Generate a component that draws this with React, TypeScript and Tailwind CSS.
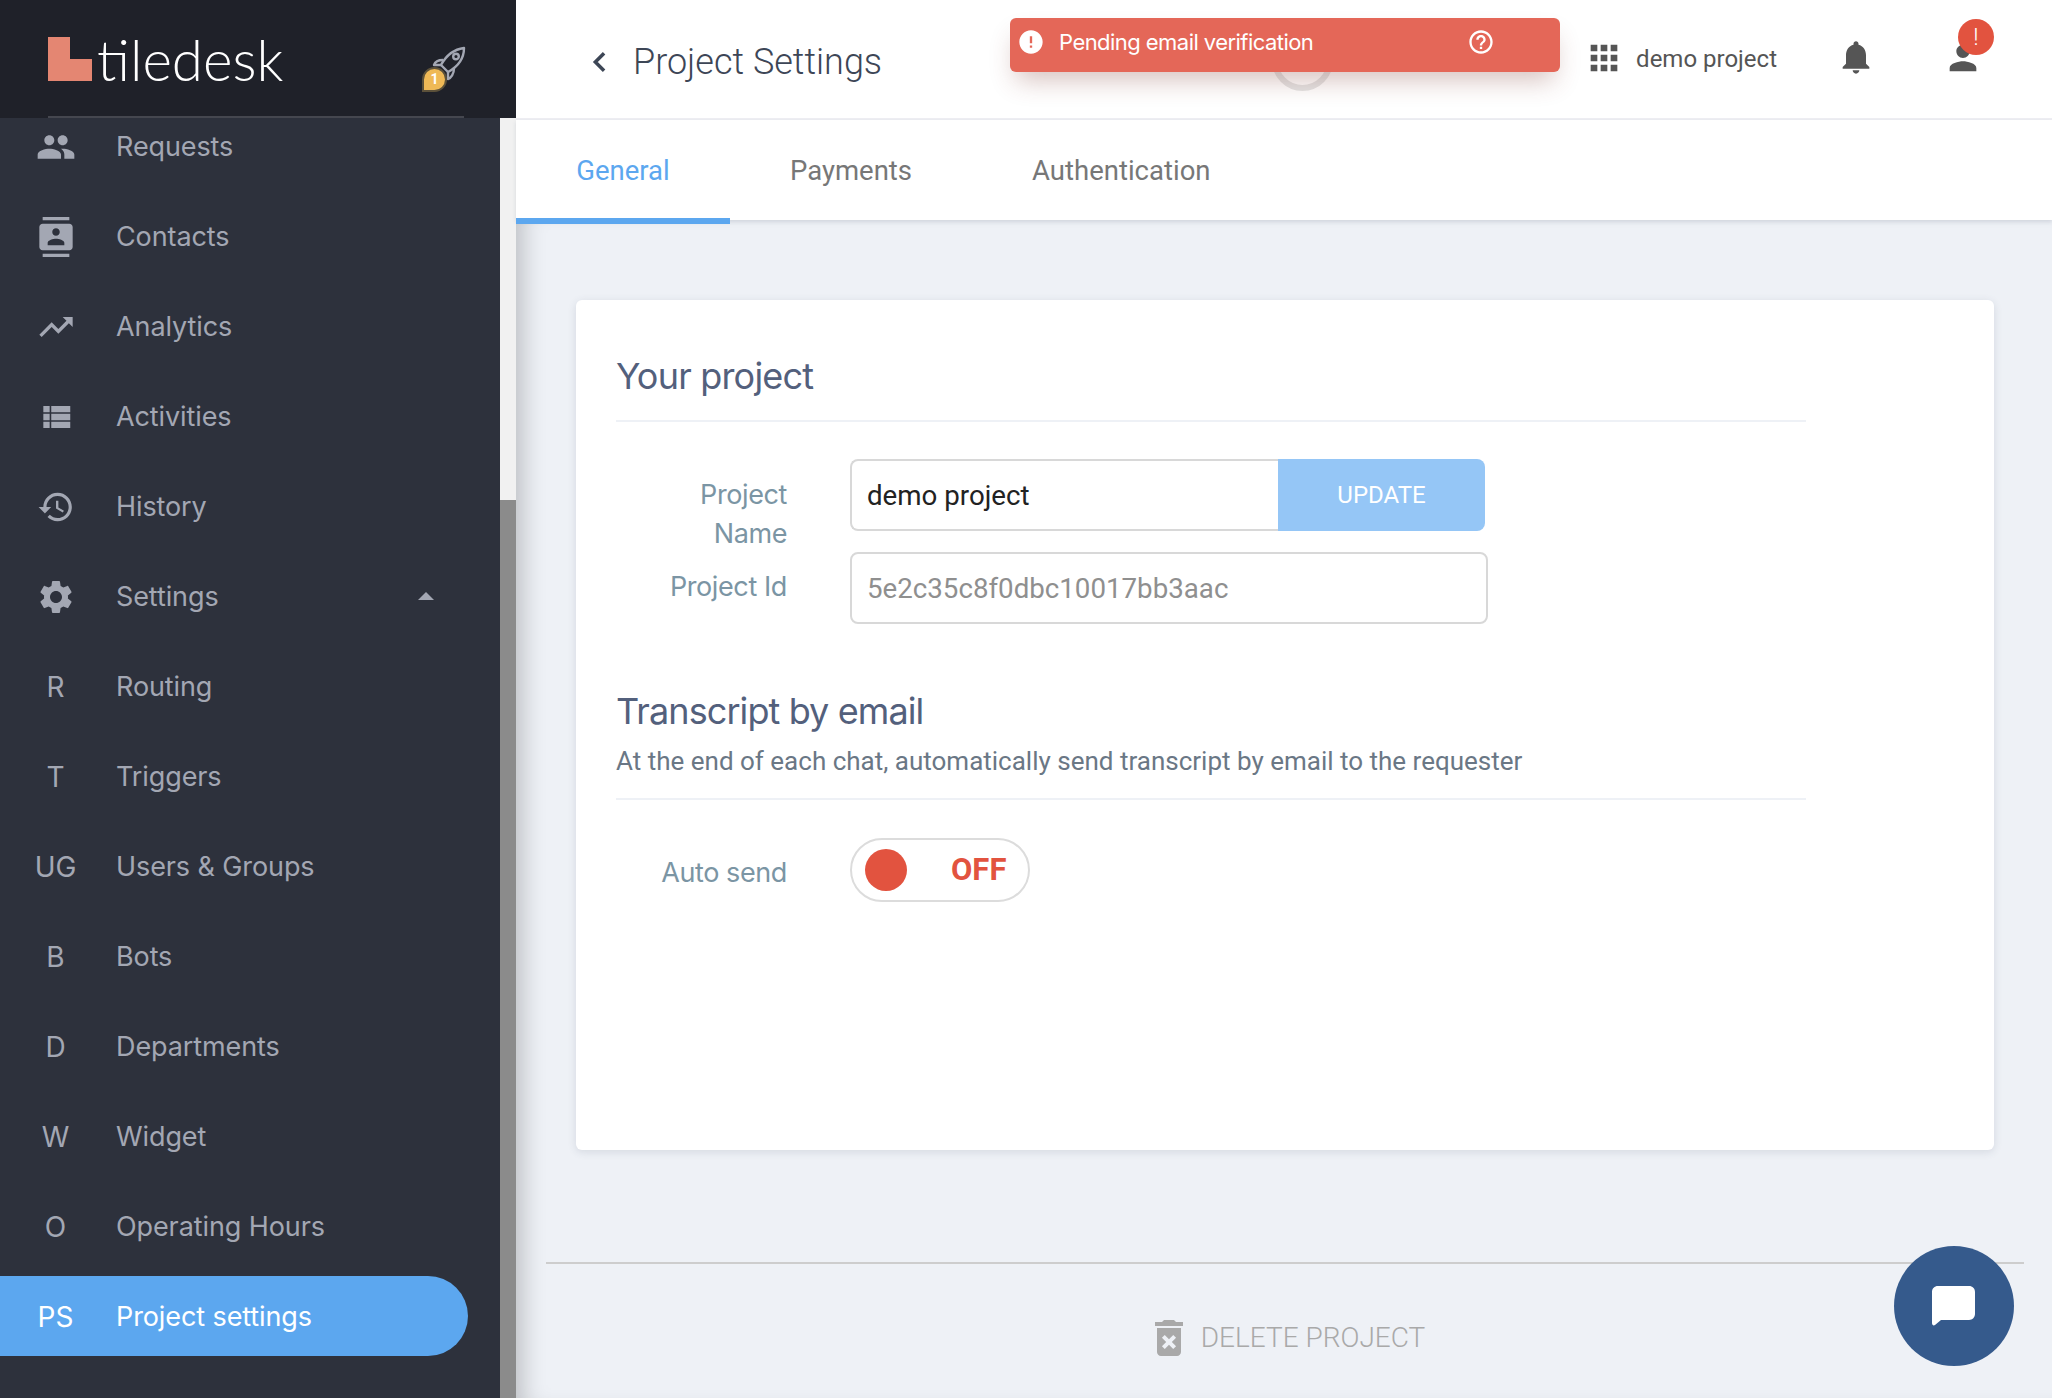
import React from "react";

const P = {
  people: "M16 11c1.66 0 2.99-1.34 2.99-3S17.66 5 16 5c-1.66 0-3 1.34-3 3s1.34 3 3 3zm-8 0c1.66 0 2.99-1.34 2.99-3S9.66 5 8 5C6.34 5 5 6.34 5 8s1.34 3 3 3zm0 2c-2.33 0-7 1.17-7 3.5V19h14v-2.5c0-2.33-4.67-3.5-7-3.5zm8 0c-.29 0-.62.02-.97.05 1.16.84 1.97 1.97 1.97 3.45V19h6v-2.5c0-2.33-4.67-3.5-7-3.5z",
  contacts: "M20 0H4v2h16V0zM4 24h16v-2H4v2zM20 4H4c-1.1 0-2 .9-2 2v12c0 1.1.9 2 2 2h16c1.1 0 2-.9 2-2V6c0-1.1-.9-2-2-2zm-8 2.75c1.24 0 2.25 1.01 2.25 2.25s-1.01 2.25-2.25 2.25S9.75 10.24 9.75 9 10.76 6.75 12 6.75zM17 17H7v-1.5c0-1.67 3.33-2.5 5-2.5s5 .83 5 2.5V17z",
  trending: "M16 6l2.29 2.29-4.88 4.88-4-4L2 16.59 3.41 18l6-6 4 4 6.3-6.29L22 12V6z",
  list: "M4 14h4v-4H4v4zm0 5h4v-4H4v4zM4 9h4V5H4v4zm5 5h12v-4H9v4zm0 5h12v-4H9v4zM9 5v4h12V5H9z",
  history: "M13 3c-4.97 0-9 4.03-9 9H1l3.89 3.89.07.14L9 12H6c0-3.87 3.13-7 7-7s7 3.13 7 7-3.13 7-7 7c-1.93 0-3.68-.79-4.94-2.06l-1.42 1.42C8.27 19.99 10.51 21 13 21c4.97 0 9-4.03 9-9s-4.03-9-9-9zm-1 5v5l4.28 2.54.72-1.21-3.5-2.08V8H12z",
  settings: "M19.14 12.94c.04-.3.06-.61.06-.94 0-.32-.02-.64-.07-.94l2.03-1.58c.18-.14.23-.41.12-.61l-1.92-3.32c-.12-.22-.37-.29-.59-.22l-2.39.96c-.5-.38-1.03-.7-1.62-.94l-.36-2.54c-.04-.24-.24-.41-.48-.41h-3.84c-.24 0-.43.17-.47.41l-.36 2.54c-.59.24-1.13.57-1.62.94l-2.39-.96c-.22-.08-.47 0-.59.22L2.74 8.87c-.12.21-.08.47.12.61l2.03 1.58c-.05.3-.09.63-.09.94s.02.64.07.94l-2.03 1.58c-.18.14-.23.41-.12.61l1.92 3.32c.12.22.37.29.59.22l2.39-.96c.5.38 1.03.7 1.62.94l.36 2.54c.05.24.24.41.48.41h3.84c.24 0 .44-.17.47-.41l.36-2.54c.59-.24 1.13-.56 1.62-.94l2.39.96c.22.08.47 0 .59-.22l1.92-3.32c.12-.22.07-.47-.12-.61l-2.01-1.58zM12 15.6c-1.98 0-3.6-1.62-3.6-3.6s1.62-3.6 3.6-3.6 3.6 1.62 3.6 3.6-1.62 3.6-3.6 3.6z",
  apps: "M4 8h4V4H4v4zm6 12h4v-4h-4v4zm-6 0h4v-4H4v4zm0-6h4v-4H4v4zm6 0h4v-4h-4v4zm6-10v4h4V4h-4zm-6 4h4V4h-4v4zm6 6h4v-4h-4v4zm0 6h4v-4h-4v4z",
  bell: "M12 22c1.1 0 2-.9 2-2h-4c0 1.1.89 2 2 2zm6-6v-5c0-3.07-1.64-5.64-4.5-6.32V4c0-.83-.67-1.5-1.5-1.5s-1.5.67-1.5 1.5v.68C7.63 5.36 6 7.92 6 11v5l-2 2v1h16v-1l-2-2z",
  person: "M12 12c2.21 0 4-1.79 4-4s-1.79-4-4-4-4 1.79-4 4 1.79 4 4 4zm0 2c-2.67 0-8 1.34-8 4v2h16v-2c0-2.66-5.33-4-8-4z",
  del: "M6 19c0 1.1.9 2 2 2h8c1.1 0 2-.9 2-2V7H6v12zm2.46-7.12l1.41-1.41L12 12.59l2.12-2.12 1.41 1.41L13.41 14l2.12 2.12-1.41 1.41L12 15.41l-2.12 2.12-1.41-1.41L10.59 14l-2.13-2.12zM15.5 4l-1-1h-5l-1 1H5v2h14V4z",
  error: "M12 2C6.48 2 2 6.48 2 12s4.48 10 10 10 10-4.48 10-10S17.52 2 12 2zm1 15h-2v-2h2v2zm0-4h-2V7h2v6z",
  help: "M11 18h2v-2h-2v2zm1-16C6.48 2 2 6.48 2 12s4.48 10 10 10 10-4.48 10-10S17.52 2 12 2zm0 18c-4.41 0-8-3.59-8-8s3.59-8 8-8 8 3.59 8 8-3.59 8-8 8zm0-14c-2.21 0-4 1.79-4 4h2c0-1.1.9-2 2-2s2 .9 2 2c0 2-3 1.75-3 5h2c0-2.25 3-2.5 3-5 0-2.21-1.79-4-4-4z",
};

function I({ d, className }: { d: string; className?: string }) {
  return (
    <svg viewBox="0 0 24 24" fill="currentColor" className={className}>
      <path d={d} />
    </svg>
  );
}

const items: { icon?: string; mono?: string; label: string; caret?: boolean; active?: boolean; iconClass?: string }[] = [
  { icon: P.people, label: "Requests", iconClass: "w-[40px] h-[40px]" },
  { icon: P.contacts, label: "Contacts", iconClass: "w-[40px] h-[40px]" },
  { icon: P.trending, label: "Analytics", iconClass: "w-[40px] h-[40px]" },
  { icon: P.list, label: "Activities", iconClass: "w-[38px] h-[38px]" },
  { icon: P.history, label: "History", iconClass: "w-[38px] h-[38px]" },
  { icon: P.settings, label: "Settings", caret: true, iconClass: "w-[40px] h-[40px]" },
  { mono: "R", label: "Routing" },
  { mono: "T", label: "Triggers" },
  { mono: "UG", label: "Users & Groups" },
  { mono: "B", label: "Bots" },
  { mono: "D", label: "Departments" },
  { mono: "W", label: "Widget" },
  { mono: "O", label: "Operating Hours" },
  { mono: "PS", label: "Project settings", active: true },
];

function NavRow({ item }: { item: (typeof items)[number] }) {
  const color = item.active ? "text-white" : "text-[#a3a7b3]";
  return (
    <div className="h-[90px] flex items-center shrink-0">
      <div
        className={`h-[80px] w-[468px] flex items-center rounded-r-[40px] ${color} ${item.active ? "bg-[#5ca7ef]" : ""}`}
      >
        <div className="w-[111px] flex justify-center shrink-0 text-[28px] pt-[1px]">
          {item.icon ? <I d={item.icon} className={item.iconClass} /> : item.mono}
        </div>
        <span className="ml-[5px] pt-[2px] text-[27px] tracking-[-0.1px]">{item.label}</span>
        {item.caret && (
          <span className="ml-auto mr-[34px] w-0 h-0 border-l-[8px] border-r-[8px] border-b-[8px] border-l-transparent border-r-transparent border-b-[#a3a7b3]" />
        )}
      </div>
    </div>
  );
}

function Rocket() {
  return (
    <div className="relative w-[40px] h-[40px] mt-[14px]">
      <svg viewBox="0 0 40 40" className="w-[40px] h-[40px]" fill="none" stroke="#a3a7b3" strokeWidth="2.4" strokeLinejoin="round">
        <path d="M14 20 C20 9 29 4 37 3 C37 12 32 21 21 27 Z" />
        <circle cx="29" cy="11.5" r="2.8" />
        <path d="M14 20 L7 20 C8 17 11 15 16 15" />
        <path d="M21 27 L21 34 C24 33 27 29 27 23" />
      </svg>
      <div className="absolute left-[-5px] bottom-[-7px] w-[21px] h-[21px] rounded-full rounded-bl-[3px] bg-[#efb956] border-[2px] border-[#5c513a] flex items-center justify-center text-white text-[14px] font-bold font-['Roboto',sans-serif] box-content">
        1
      </div>
    </div>
  );
}

export default function App() {
  return (
    <div className="relative w-[2052px] h-[1398px] flex overflow-hidden font-['Roboto',sans-serif] bg-white">
      <aside className="w-[516px] h-full flex flex-col shrink-0">
        <div className="h-[118px] bg-[#1f2129] pl-[48px] pr-[52px] shrink-0 flex flex-col">
          <div className="flex-1 flex items-center justify-between">
            <div className="flex items-end h-[44px] mt-[2px]">
              <svg viewBox="0 0 44 44" className="w-[44px] h-[44px] shrink-0">
                <path d="M0 0H22V22H44V44H0Z" fill="#e48672" />
              </svg>
              <span className="ml-[5px] font-['Lato',sans-serif] font-light text-white text-[56.5px] leading-[44px] h-[44px]">tiledesk</span>
            </div>
            <div className="-mr-[3px]"><Rocket /></div>
          </div>
          <div className="h-[2px] bg-[#45474f]" />
        </div>
        <div className="flex-1 flex min-h-0">
          <nav className="w-[500px] bg-[#2d313c] overflow-hidden font-['Inter',sans-serif]">
            <div className="-mt-[17px]">
              {items.map((it) => (
                <NavRow key={it.label} item={it} />
              ))}
            </div>
          </nav>
          <div className="w-[16px] flex flex-col">
            <div className="h-[382px] bg-[#f1f1f1]" />
            <div className="flex-1 bg-[#8b8b8b]" />
          </div>
        </div>
      </aside>

      <main className="flex-1 min-w-0 flex flex-col bg-[#eef1f6]">
        <header className="h-[120px] bg-white border-b-2 border-[#eeeef3] flex items-center shrink-0">
          <svg viewBox="0 0 24 24" className="ml-[70px] w-[28px] h-[28px] text-[#3d4656] mt-[5px]" fill="none" stroke="currentColor" strokeWidth="3">
            <path d="M15.5 4.5 8 12l7.5 7.5" />
          </svg>
          <h1 className="ml-[19px] text-[36px] font-light text-[#3d4656] mt-[5px]">Project Settings</h1>
          <div className="ml-auto flex items-center text-[#555555] pr-[69px]">
            <I d={P.apps} className="w-[40px] h-[40px] -mt-[2px]" />
            <span className="ml-[12px] text-[24px]">demo project</span>
            <I d={P.bell} className="ml-[59px] w-[40px] h-[40px] -mt-[5px]" />
            <div className="relative ml-[67px] -mt-[3px]">
              <I d={P.person} className="w-[40px] h-[40px]" />
              <div className="absolute left-[15px] -top-[19px] w-[36px] h-[36px] rounded-full bg-[#e2533f] text-white flex items-center justify-center text-[24px] font-light">!</div>
            </div>
          </div>
        </header>

        <div className="h-[100px] bg-white flex items-start shrink-0 text-[27.5px] text-[#777777] shadow-[0_2px_4px_rgba(60,70,100,0.14)] relative">
          <div className="h-[104px] pt-[3px] w-[214px] flex items-center justify-center text-[#5ca7ef] border-b-[6px] border-[#5ca7ef] box-border">General</div>
          <div className="h-[98px] pt-[3px] flex items-center ml-[60px]">Payments</div>
          <div className="h-[98px] pt-[3px] flex items-center ml-[120px]">Authentication</div>
        </div>

        <div className="flex-1 min-h-0 flex flex-col shadow-[inset_22px_0_24px_-16px_rgba(0,0,0,0.22)]">
          <section className="mt-[80px] ml-[60px] w-[1418px] h-[850px] bg-white rounded-[6px] shadow-[0_2px_8px_rgba(60,70,100,0.14)] pl-[40px] shrink-0">
            <h2 className="w-[1190px] h-[122px] pt-[52px] border-b-2 border-[#eef1f6] text-[36px] leading-[48px] text-[#53607c] font-['Inter',sans-serif] tracking-[-0.8px]">Your project</h2>

            <div className="mt-[37px] flex items-start">
              <label className="w-[171px] text-right text-[#7b95a4] text-[27px] leading-[39px] pt-[16px] font-['Inter',sans-serif] tracking-[-0.4px]">Project<br />Name</label>
              <div className="ml-[63px] flex h-[72px]">
                <div className="w-[428px] h-full border-2 border-r-0 border-[#d8d8d8] rounded-l-[8px] flex items-center pl-[15px] pt-[2px] text-[27.7px] text-[#222222]">demo project</div>
                <div className="w-[207px] h-full bg-[#95c6f6] rounded-r-[8px] flex items-center justify-center text-white text-[24px]">UPDATE</div>
              </div>
            </div>
            <div className="flex items-start">
              <label className="w-[171px] text-right text-[#7b95a4] text-[27px] leading-[39px] pt-[14px] font-['Inter',sans-serif] tracking-[-0.4px]">Project Id</label>
              <div className="ml-[63px] -mt-[1px] w-[638px] h-[72px] border-2 border-[#d8d8d8] rounded-[8px] flex items-center pl-[15px] pt-[1px] text-[27.7px] text-[#8f8f8f]">5e2c35c8f0dbc10017bb3aac</div>
            </div>

            <h3 className="mt-[63px] text-[36px] leading-[48px] text-[#53607c] font-['Inter',sans-serif] tracking-[-0.9px]">Transcript by email</h3>
            <div className="w-[1190px] h-[65px] border-b-2 border-[#eef1f6] pt-[8px] text-[26px] leading-[36px] text-[#6a7785]">At the end of each chat, automatically send transcript by email to the requester</div>

            <div className="mt-[38px] flex items-center">
              <label className="w-[171px] text-right text-[#7b95a4] text-[27px] leading-[39px] mt-[4px] font-['Inter',sans-serif] tracking-[-0.4px]">Auto send</label>
              <div className="ml-[63px] w-[180px] h-[64px] border-2 border-[#dcdcdc] rounded-[32px] flex items-center pl-[13px]">
                <span className="w-[42px] h-[42px] rounded-full bg-[#e2533f] shrink-0" />
                <span className="ml-[44px] text-[31px] font-bold text-[#e2533f]">OFF</span>
              </div>
            </div>
          </section>

          <div className="mt-[112px] ml-[30px] w-[1478px] border-t-2 border-[#cdcdcd] flex items-center justify-center pt-[50px] text-[#a9a9a9]">
            <div className="flex items-center">
              <I d={P.del} className="w-[48px] h-[48px]" />
              <span className="ml-[8px] text-[28px] font-light">DELETE PROJECT</span>
            </div>
          </div>
        </div>
      </main>

      <div className="absolute left-[1272px] top-[30px] w-[61px] h-[61px] rounded-full border-[6px] border-[#e4e4e4]" />

      <div className="absolute left-[1010px] top-[18px] w-[550px] h-[54px] pb-[6px] bg-[#e46758] rounded-[6px] flex items-center text-white shadow-[0_14px_26px_-6px_rgba(120,50,40,0.3)]">
        <I d={P.error} className="ml-[7px] w-[28px] h-[28px]" />
        <span className="ml-[14px] text-[22px] font-['Inter',sans-serif] tracking-[-0.55px]">Pending email verification</span>
        <I d={P.help} className="ml-auto mr-[65px] w-[28px] h-[28px]" />
      </div>

      <div className="absolute left-[1894px] top-[1246px] w-[120px] h-[120px] rounded-full bg-[#355a8c] flex items-center justify-center">
        <svg viewBox="0 0 44 40" className="w-[44px] h-[40px]" fill="white">
          <path d="M6 0H37C40.5 0 43 2.5 43 6V28C43 31 40.5 34 37 34H9L3 39C1.5 40 0 39 0 37V6C0 2.5 2.5 0 6 0Z" />
        </svg>
      </div>
    </div>
  );
}
